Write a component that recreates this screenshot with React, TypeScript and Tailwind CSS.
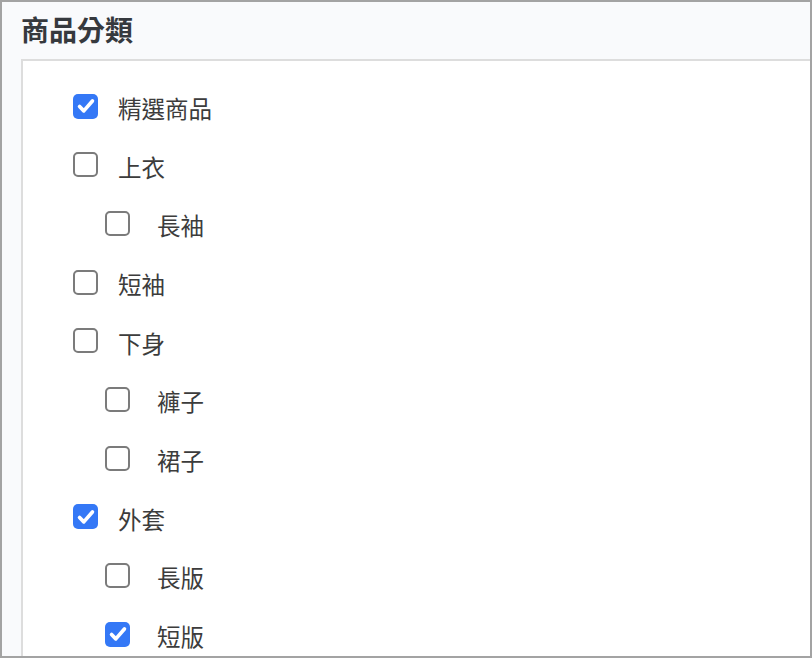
import React from "react"

type Item = { label: string; level: 0 | 1; checked: boolean }

const ITEMS: Item[] = [
  { label: "精選商品", level: 0, checked: true },
  { label: "上衣", level: 0, checked: false },
  { label: "長袖", level: 1, checked: false },
  { label: "短袖", level: 0, checked: false },
  { label: "下身", level: 0, checked: false },
  { label: "褲子", level: 1, checked: false },
  { label: "裙子", level: 1, checked: false },
  { label: "外套", level: 0, checked: true },
  { label: "長版", level: 1, checked: false },
  { label: "短版", level: 1, checked: true },
]

function Box({ checked }: { checked: boolean }) {
  if (checked) {
    return (
      <span className="flex h-[25px] w-[25px] shrink-0 items-center justify-center rounded-[5px] bg-[#3478f6]">
        <svg viewBox="0 0 24 24" className="h-[22px] w-[22px]" fill="none">
          <path d="M5 12.5l4.6 4.8L19 6.5" stroke="#fff" strokeWidth="4" strokeLinecap="round" strokeLinejoin="round" />
        </svg>
      </span>
    )
  }
  return <span className="h-[25px] w-[25px] shrink-0 rounded-[5px] border-2 border-[#7b7b7b] bg-white" />
}

export default function App() {
  return (
    <div
      className="h-[658px] w-[812px] overflow-hidden border-2 border-[#a3a3a3] bg-[#f9fafc]"
      style={{ fontFamily: '"Noto Sans CJK TC", "Noto Sans", sans-serif' }}
    >
      <h2 className="flex h-[57px] items-center pl-[19px] pb-[4px] text-[28px] font-bold leading-none text-[#36393e]">
        商品分類
      </h2>
      <div className="w-[820px] h-[620px] ml-[19px] border-2 border-[#dddddd] bg-white pt-[16px] pl-[50px]">
        {ITEMS.map((it, i) => (
          <label
            key={i}
            className={
              "flex h-[58.67px] items-center " +
              (it.level === 1 ? "pl-[32px] gap-[27px]" : "gap-[20px]")
            }
          >
            <Box checked={it.checked} />
            <span className="pt-[5px] text-[23.5px] leading-none text-[#3c3c3c]">{it.label}</span>
          </label>
        ))}
      </div>
    </div>
  )
}
